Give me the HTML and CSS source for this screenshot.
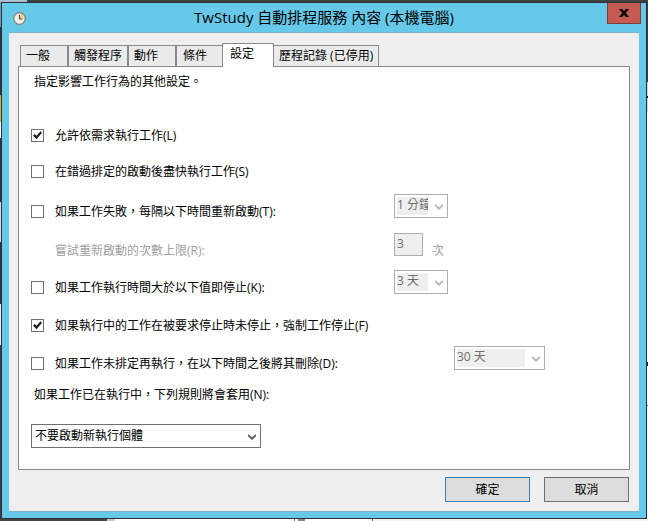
FILE: index.html
```html
<!DOCTYPE html>
<html lang="zh-Hant">
<head>
<meta charset="utf-8">
<title>TwStudy 自動排程服務 內容</title>
<link rel="stylesheet" href="styles.css">
</head>
<body>
<div class="desktop">
  <div class="edge edge-left"></div>
  <main class="window">
    <header class="titlebar">
      <svg class="clock" width="13" height="13" viewBox="0 0 13 13">
        <circle cx="6.5" cy="6.5" r="5.8" fill="#f1eee9" stroke="#87827b" stroke-width="1.3"/>
        <path d="M6.5 6.5V2A4.5 4.5 0 0 1 11 6.5Z" fill="#f8ce7c"/>
        <path d="M6.5 3V7H9.5" fill="none" stroke="#4d4944" stroke-width="1.1"/>
      </svg>
      <h1 class="title">TwStudy 自動排程服務 內容 (本機電腦)</h1>
      <button class="close" aria-label="關閉"><svg width="10" height="8" viewBox="0 0 10 8"><path d="M0 0H3.2L5 2.2L6.8 0H10L6.7 4L10 8H6.8L5 5.8L3.2 8H0L3.3 4Z"/></svg></button>
    </header>
    <section class="client">
      <nav class="tabs">
        <span class="tab t1">一般</span><span class="tab t2">觸發程序</span><span class="tab t3">動作</span><span class="tab t4">條件</span><span class="tab active">設定</span><span class="tab t6">歷程記錄 (已停用)</span>
      </nav>
      <div class="panel">
        <p class="intro">指定影響工作行為的其他設定。</p>
        <div class="row"><span class="check"><svg class="tick" width="9" height="9" viewBox="0 0 9 9"><path d="M0 4.8L1.7 3L3.5 4.8L7.5 0.3L9 1.8L3.6 8.3Z"/></svg></span><span class="label">允許依需求執行工作(L)</span></div>
        <div class="row gap12"><span class="check"></span><span class="label">在錯過排定的啟動後盡快執行工作(S)</span></div>
        <div class="row gap16"><span class="check"></span><span class="label">如果工作失敗，每隔以下時間重新啟動(T):</span><span class="select off"><span class="value">1 分鐘</span><svg class="arrow" width="8" height="6" viewBox="0 0 8 6"><path d="M0 0L4 3.3L8 0V2.2L4 6L0 2.2Z"/></svg></span></div>
        <div class="row gap15 attempts"><span class="label muted">嘗試重新啟動的次數上限(R):</span><span class="number">3</span><span class="unit muted">次</span></div>
        <div class="row gap14"><span class="check"></span><span class="label">如果工作執行時間大於以下值即停止(K):</span><span class="select off"><span class="value">3 天</span><svg class="arrow" width="8" height="6" viewBox="0 0 8 6"><path d="M0 0L4 3.3L8 0V2.2L4 6L0 2.2Z"/></svg></span></div>
        <div class="row gap14"><span class="check"><svg class="tick" width="9" height="9" viewBox="0 0 9 9"><path d="M0 4.8L1.7 3L3.5 4.8L7.5 0.3L9 1.8L3.6 8.3Z"/></svg></span><span class="label">如果執行中的工作在被要求停止時未停止，強制工作停止(F)</span></div>
        <div class="row gap14"><span class="check"></span><span class="label wide">如果工作未排定再執行，在以下時間之後將其刪除(D):</span><span class="select off long"><span class="value">30 天</span><svg class="arrow" width="8" height="6" viewBox="0 0 8 6"><path d="M0 0L4 3.3L8 0V2.2L4 6L0 2.2Z"/></svg></span></div>
        <p class="rule">如果工作已在執行中，下列規則將會套用(N):</p>
        <div class="select policy"><span class="value">不要啟動新執行個體</span><svg class="arrow" width="8" height="6" viewBox="0 0 8 6"><path d="M0 0L4 3.3L8 0V2.2L4 6L0 2.2Z"/></svg></div>
      </div>
      <footer class="actions"><button class="btn primary">確定</button><button class="btn">取消</button></footer>
    </section>
  </main>
  <div class="edge edge-right"></div>
</div>
</body>
</html>
```
FILE: styles.css
```css
* { box-sizing: border-box; }
body, h1, p { margin: 0; font-weight: 400; }
body { overflow: hidden; }
body, button { font-family: "Open Sans", "Noto Sans CJK TC", sans-serif; font-size: 12px; color: #000; }
button { padding: 0; border-radius: 0; }
svg { display: block; flex: none; }

.desktop {
  display: grid;
  grid-template-columns: 1px 646px 1px;
  width: 648px;
  height: 521px;
  padding: 2px 0;
  background:
    linear-gradient(90deg, #454545 107px, #bccbd1 107px 115px, #fff 115px 294px, #777 294px 295px, #fff 295px 298px, #888 298px 305px, #fff 305px 372px, #666 372px 373px, #f6f6f0 373px) 0 519px / 648px 2px no-repeat,
    linear-gradient(90deg, #a9bdd2 0 27px, #414141 27px) 0 0 / 648px 2px no-repeat,
    #444;
}
.edge-left { background: linear-gradient(#7797bd 0 25px, #333 25px 93px, #e9b21c 93px 120px, #fff 120px 136px, #333 136px 200px, #d6dbdf 200px 240px, #333 240px 302px, #eee 302px 343px, #3b3b43 343px); }
.edge-right { background: linear-gradient(#3c3c3c 80px, #c8dae8 80px 94px, #113 94px 96px, #c8dae8 96px 110px, #fff 110px 360px, #222 360px 364px, #fff 364px 403px, #777 403px 404px, #f5f5f5 404px); }

.window {
  display: grid;
  grid-template-rows: 29px 480px;
  height: 517px;
  padding: 0 7px;
  border: 1px solid #2d3036;
  background: #66c9e9;
}
.titlebar {
  display: grid;
  grid-template-columns: 13px 1fr 34px;
  margin-right: -2px;
  padding-left: 4px;
}
.clock { margin-top: 9px; }
.title { padding-left: 15px; font-size: 15px; line-height: 29px; text-align: center; white-space: nowrap; }
.close {
  display: flex;
  justify-content: center;
  align-items: center;
  height: 21px;
  border: 1px solid #773e3e;
  border-top: 0;
  background: #c55a50;
}
.client {
  padding: 10px 9px 0;
  border: solid #83b0c6;
  border-width: 1px 0;
  background: #efefef;
}
.tabs { display: flex; align-items: flex-end; height: 23px; padding-left: 2px; }
.tab {
  position: relative;
  height: 21px;
  padding-left: 5px;
  border: 1px solid #898994;
  border-bottom: 0;
  background: #ebebeb;
  line-height: 20px;
  white-space: nowrap;
}
.t1 { width: 48px; }
.t2 { width: 60px; }
.t3 { width: 48px; }
.t4 { width: 46px; border-right: 0; padding-left: 6px; }
.t6 { width: 105px; padding-left: 5px; border-left: 0; }
.active { z-index: 1; width: 52px; height: 24px; margin-bottom: -1px; padding-left: 7px; background: #fff; }
.panel { height: 404px; padding-left: 12px; border: 1px solid #898994; background: #fff; }
.intro { height: 51px; padding-left: 3px; line-height: 30px; }
.row { display: flex; align-items: flex-end; height: 24px; }
.gap12 { margin-top: 12px; }
.gap14 { margin-top: 14px; }
.gap15 { margin-top: 15px; }
.gap16 { margin-top: 16px; }
.check { display: flex; flex: none; justify-content: center; align-items: center; width: 13px; height: 13px; border: 1px solid #707070; }
.tick { fill: #222; }
.label { flex: none; width: 339px; margin-left: 11px; line-height: 13px; white-space: nowrap; }
.wide { width: 399px; }
.muted { color: #a0a0a0; }
.attempts { height: 23px; }
.attempts .label, .unit { line-height: 11px; }
.attempts .label { margin-left: 24px; }
.number { flex: none; width: 29px; height: 23px; padding-left: 2px; border: 1px solid #abadb3; background: #efefef; color: #6d6d6d; line-height: 19px; }
.unit { margin-left: 9px; }
.select { display: flex; flex: none; align-items: center; justify-content: space-between; width: 54px; height: 24px; padding: 2px 4px 2px 2px; border: 1px solid #707070; background: #fff; }
.select .value { overflow: hidden; height: 18px; line-height: 17px; white-space: nowrap; }
.arrow { margin-top: 2px; fill: #606060; }
.off { border-color: #abadb3; color: #6d6d6d; }
.off .value { width: 31px; background: #efefef; line-height: 16px; }
.off .arrow { fill: #b9b9b9; }
.long { width: 91px; }
.long .value { width: 68px; }
.rule { margin: 18px 0 22px; padding-left: 3px; line-height: 14px; }
.policy { width: 230px; padding-left: 3px; }
.actions { display: flex; justify-content: flex-end; gap: 14px; padding: 7px 1px 0 0; }
.btn { width: 85px; height: 25px; padding-bottom: 2px; border: 1px solid #707070; background: #ddd; }
.primary { border-color: #3c7fb1; }
```
